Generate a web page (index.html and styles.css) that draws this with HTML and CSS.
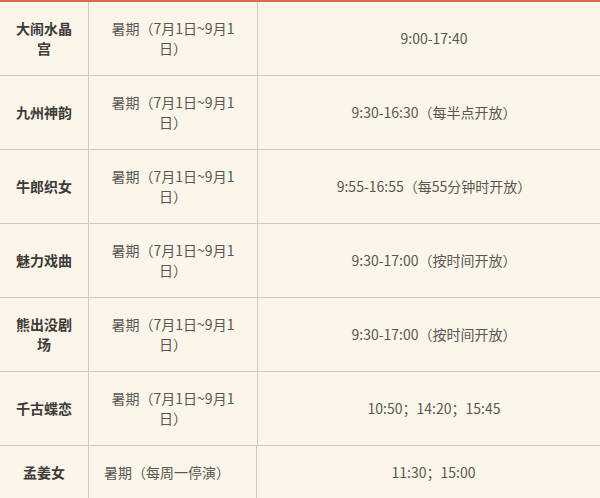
FILE: index.html
```html
<!DOCTYPE html>
<html lang="zh-CN">
<head>
<meta charset="utf-8">
<title>演出时间表</title>
<link rel="stylesheet" href="styles.css">
</head>
<body>
<div class="schedule">
  <div class="row">
    <div class="cell name">大闹水晶宫</div>
    <div class="cell period">暑期（7月1日~9月1日）</div>
    <div class="cell time">9:00-17:40</div>
  </div>
  <div class="row">
    <div class="cell name">九州神韵</div>
    <div class="cell period">暑期（7月1日~9月1日）</div>
    <div class="cell time">9:30-16:30（每半点开放）</div>
  </div>
  <div class="row">
    <div class="cell name">牛郎织女</div>
    <div class="cell period">暑期（7月1日~9月1日）</div>
    <div class="cell time">9:55-16:55（每55分钟时开放）</div>
  </div>
  <div class="row">
    <div class="cell name">魅力戏曲</div>
    <div class="cell period">暑期（7月1日~9月1日）</div>
    <div class="cell time">9:30-17:00（按时间开放）</div>
  </div>
  <div class="row">
    <div class="cell name">熊出没剧场</div>
    <div class="cell period">暑期（7月1日~9月1日）</div>
    <div class="cell time">9:30-17:00（按时间开放）</div>
  </div>
  <div class="row">
    <div class="cell name">千古蝶恋</div>
    <div class="cell period">暑期（7月1日~9月1日）</div>
    <div class="cell time">10:50；14:20；15:45</div>
  </div>
  <div class="row row--last">
    <div class="cell name">孟姜女</div>
    <div class="cell period period--left">暑期（每周一停演）</div>
    <div class="cell time">11:30；15:00</div>
  </div>
</div>
</body>
</html>
```

FILE: styles.css
```css
html, body {
  margin: 0;
  padding: 0;
  background: #fcf5ea;
}

body {
  font-family: "Noto Sans CJK SC", "Noto Sans", sans-serif;
  font-size: 14px;
  color: #5a5753;
}

.schedule {
  width: 600px;
  border-top: 2px solid #d9694f;
  background: #fcf5ea;
}

.row {
  display: grid;
  grid-template-columns: 89px 169px 1fr;
  border-bottom: 1px solid #d4c9ba;
}

.cell {
  display: flex;
  align-items: center;
  justify-content: center;
  text-align: center;
  padding: 17px 12px;
  line-height: 19.5px;
  border-right: 1px solid #d4c9ba;
}

.name {
  font-weight: bold;
  color: #3d3b38;
}

.period {
  padding-left: 19px;
  padding-right: 19px;
}

.period--left {
  justify-content: flex-start;
  text-align: left;
  padding-left: 15px;
  padding-right: 0;
}

.row--last {
  grid-template-columns: 89px 168px 1fr;
}

.time {
  border-right: none;
  padding-right: 2px;
}
```
